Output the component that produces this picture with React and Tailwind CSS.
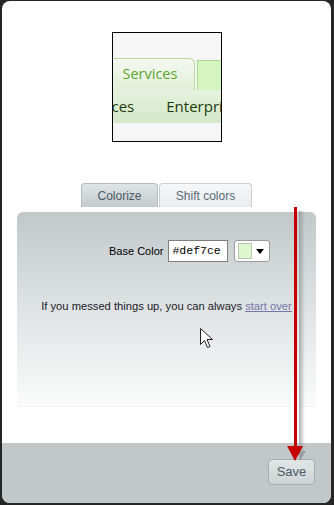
export default function App() {
    return (
        <div className="w-[334px] h-[505px] bg-[#262626] pt-[1px] pl-[2px] pr-[3px] pb-[2px] font-['Liberation_Sans',Arial,sans-serif]">
            <div className="relative h-full bg-white rounded-[8px] overflow-hidden flex flex-col">
                {/* preview thumbnail */}
                <div className="mt-[31px] mx-auto w-[110px] h-[110px] border border-black bg-[#f6f6f6] flex flex-col overflow-hidden font-['Open_Sans',sans-serif]">
                    <div className="h-[25px]" />
                    <div className="h-[32px] flex items-end">
                        <div className="w-[82px] h-[32px] rounded-tr-[6px] border-t border-r border-[#b5dc9c] bg-gradient-to-b from-[#f5f8f2] to-[#e2efd7] flex items-center pl-[10px] text-[14.5px] text-[#5aa52e] leading-none">
                            Services
                        </div>
                        <div className="ml-[2px] flex-1 h-[30px] border-l border-t border-[#a9d98c] bg-[#d4f5bf]" />
                    </div>
                    <div className="h-[33px] bg-gradient-to-b from-[#e6f2df] to-[#d3e8c8] flex items-center text-[15px] text-[#1d3a0c] leading-none whitespace-nowrap overflow-hidden">
                        <span className="ml-[-1px]">ces</span>
                        <span className="ml-[32px]">Enterpris</span>
                    </div>
                    <div className="flex-1" />
                </div>

                {/* tabs */}
                <div className="mt-[41px] flex justify-center gap-[1px] text-[12px]">
                    <div className="w-[77px] h-[24px] rounded-t-[4px] border border-b-0 border-[#b4bcbe] bg-gradient-to-b from-[#e0e4e5] to-[#c3cacc] flex items-center justify-center text-[#4a5a66]">
                        Colorize
                    </div>
                    <div className="w-[93px] h-[24px] rounded-t-[4px] border border-b-0 border-[#c8cecf] bg-gradient-to-b from-[#f6f7f8] to-[#e9ecee] flex items-center justify-center text-[#5a6b78]">
                        Shift colors
                    </div>
                </div>

                {/* colorize panel */}
                <div className="mt-[5px] mx-[15px] h-[195px] rounded-t-[6px] bg-gradient-to-b from-[#c2c8ca] via-[#dfe3e4] to-[#fbfbfb] border-b border-[#f1f2f2] flex flex-col">
                    <div className="mt-[28px] pl-[92px] flex items-center h-[22px]">
                        <span className="text-[11px] text-black">Base Color</span>
                        <div className="ml-[5px] w-[60px] h-[22px] bg-white border border-[#7e7e7e] flex items-center pl-[3px] text-[11.5px] font-['Liberation_Mono',monospace] text-black">
                            #def7ce
                        </div>
                        <div className="ml-[6px] w-[36px] h-[22px] bg-white border border-[#9a9a9a] rounded-[3px] flex items-center pl-[3px] gap-[4px]">
                            <div className="w-[14px] h-[16px] bg-[#def7ce] border border-[#b8c8b0]" />
                            <svg width="8" height="5" viewBox="0 0 8 5"><path d="M0 0h8L4 5z" fill="#000" /></svg>
                        </div>
                    </div>
                    <div className="mt-[36px] text-center text-[11.2px] text-[#1a1a2a] whitespace-nowrap">
                        If you messed things up, you can always <span className="text-[#7676a8] underline">start over</span>
                    </div>
                </div>

                <div className="flex-1" />

                {/* footer */}
                <div className="h-[60px] bg-[#c2c8ca] flex justify-end items-start pt-[16px] pr-[16px]">
                    <div className="w-[47px] h-[26px] rounded-[4px] border border-[#a6aeb1] bg-gradient-to-b from-[#e2e6e7] to-[#ccd2d3] flex items-center justify-center text-[13px] text-[#4a5a66]">
                        Save
                    </div>
                </div>

                {/* mouse cursor */}
                <svg className="absolute left-[198px] top-[327px]" width="14" height="21" viewBox="0 0 14 21">
                    <path d="M0.5 0.5v16l4-4 3 7 2.5-1-3-7h5.5z" fill="#fff" stroke="#222" strokeWidth="1" strokeLinejoin="round" />
                </svg>

                {/* red annotation arrow */}
                <svg className="absolute left-[284px] top-[206px]" width="24" height="258" viewBox="0 0 24 258">
                    <defs>
                        <linearGradient id="sh" x1="0" x2="1">
                            <stop offset="0" stopColor="#8a8f90" stopOpacity="0.7" />
                            <stop offset="1" stopColor="#8a8f90" stopOpacity="0" />
                        </linearGradient>
                    </defs>
                    <rect x="13" y="4" width="6" height="240" fill="url(#sh)" />
                    <path d="M12 244l8 0-6 10z" fill="#6e7375" opacity="0.5" />
                    <rect x="8" y="0" width="3" height="240" fill="#c40000" />
                    <path d="M1 239h16l-8 15z" fill="#c40000" />
                </svg>
            </div>
        </div>
    );
}
